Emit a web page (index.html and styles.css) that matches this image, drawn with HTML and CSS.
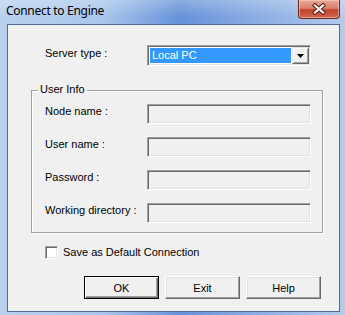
FILE: index.html
```html
<!DOCTYPE html>
<html>
<head>
    <meta charset="UTF-8">
    <title>Connect to Engine</title>
    <link rel="stylesheet" href="styles.css">
</head>
<body>
    <div class="window">
        <div class="titlebar">
            <span class="title">Connect to Engine</span>
            <div class="close">
                <svg width="14" height="12" viewBox="0 0 14 12">
                    <path d="M3 2.5 L11 9.5 M11 2.5 L3 9.5" stroke="#5a1c12" stroke-width="4.2" stroke-linecap="square"/>
                    <path d="M3 2.5 L11 9.5 M11 2.5 L3 9.5" stroke="#fff" stroke-width="2.2" stroke-linecap="square"/>
                </svg>
            </div>
        </div>
        <div class="client">
            <div class="row server-row">
                <span class="label">Server type :</span>
                <div class="combo">
                    <span class="combo-value">Local PC</span>
                    <span class="combo-btn">
                        <svg width="7" height="4" viewBox="0 0 7 4"><polygon points="0,0 7,0 3.5,4" fill="#000"/></svg>
                    </span>
                </div>
            </div>
            <div class="group">
                <span class="legend">User Info</span>
                <div class="row"><span class="label">Node name :</span><div class="field"></div></div>
                <div class="row"><span class="label">User name :</span><div class="field"></div></div>
                <div class="row"><span class="label">Password :</span><div class="field"></div></div>
                <div class="row"><span class="label">Working directory :</span><div class="field"></div></div>
            </div>
            <div class="check-row">
                <span class="checkbox"></span>
                <span class="check-label">Save as Default Connection</span>
            </div>
            <div class="buttons">
                <button class="btn default">OK</button>
                <button class="btn">Exit</button>
                <button class="btn">Help</button>
            </div>
        </div>
    </div>
</body>
</html>
```

FILE: styles.css
```css
*{
    margin: 0;
    padding: 0;
    box-sizing: border-box;
}
html,body{
    width: 100%;
    height: 100%;
    background: #fff;
}
.window{
    width: 345px;
    height: 315px;
    display: flex;
    flex-direction: column;
    background: linear-gradient(to right, #b9d1ee 0%, #a9c6ec 30%, #6592d8 52%, #86aae2 72%, #b3cbec 100%);
    font-family: "Liberation Sans", Arial, sans-serif;
    font-size: 11px;
    color: #000;
}
.titlebar{
    height: 24px;
    display: flex;
    align-items: flex-start;
    background: linear-gradient(to bottom, rgba(255,255,255,.25), rgba(255,255,255,0) 70%);
}
.title{
    font-family: "Noto Sans", "Open Sans", sans-serif;
    font-size: 12px;
    line-height: 16px;
    letter-spacing: -0.3px;
    padding: 3px 0 0 6px;
}
.close{
    margin-left: auto;
    margin-right: 5px;
    width: 42px;
    height: 19px;
    display: flex;
    align-items: center;
    justify-content: center;
    border: 1px solid #6a2a20;
    border-top: 0;
    border-radius: 0 0 4px 4px;
    background: linear-gradient(to bottom, #e8a898 0%, #d9806c 45%, #c2442e 55%, #d0664c 100%);
    box-shadow: inset 0 0 0 1px rgba(255,220,210,.5);
}
.client{
    flex: 1;
    margin: 0 5px 3px 7px;
    background: #f0f0f0;
    border: 1px solid #4e6c94;
    padding-top: 20px;
    display: flex;
    flex-direction: column;
}
.row{
    display: flex;
    align-items: flex-start;
}
.label{
    width: 102px;
    line-height: 13px;
    padding-top: 1px;
}
.server-row{
    margin-left: 37px;
}
.server-row .label{
    padding-top: 2px;
}
.combo{
    width: 164px;
    height: 21px;
    display: flex;
    background: #fff;
    border: 1px solid;
    border-color: #a0a0a0 #fff #fff #a0a0a0;
    box-shadow: inset 1px 1px #696969, inset -1px -1px #e3e3e3;
    padding: 1px 1px 1px 1px;
}
.combo-value{
    flex: 1;
    margin: 1px 1px 1px 1px;
    background: #3399ff;
    color: #fff;
    line-height: 15px;
    padding-left: 2px;
}
.combo-btn{
    width: 17px;
    height: 17px;
    display: flex;
    align-items: center;
    justify-content: center;
    background: #f0f0f0;
    border: 1px solid;
    border-color: #e3e3e3 #696969 #696969 #e3e3e3;
    box-shadow: inset 1px 1px #fff, inset -1px -1px #a0a0a0;
}
.group{
    position: relative;
    margin: 24px 0 0 23px;
    width: 292px;
    border: 1px solid #a0a0a0;
    box-shadow: 1px 1px #fff, inset 1px 1px #fff;
    padding: 13px 0 9px 13px;
    display: flex;
    flex-direction: column;
    gap: 13px;
}
.legend{
    position: absolute;
    top: -8px;
    left: 6px;
    padding: 0 2px;
    line-height: 13px;
    background: #f0f0f0;
}
.field{
    width: 164px;
    height: 20px;
    background: #f0f0f0;
    border: 1px solid;
    border-color: #a0a0a0 #fff #fff #a0a0a0;
    box-shadow: inset 1px 1px #696969, inset -1px -1px #e3e3e3;
}
.check-row{
    margin: 13px 0 0 37px;
    display: flex;
    align-items: center;
    gap: 5px;
    height: 13px;
}
.checkbox{
    width: 13px;
    height: 13px;
    background: #fff;
    border: 1px solid;
    border-color: #a0a0a0 #fff #fff #a0a0a0;
    box-shadow: inset 1px 1px #696969, inset -1px -1px #e3e3e3;
}
.check-label{
    line-height: 13px;
}
.buttons{
    margin: 17px 0 0 76px;
    display: flex;
    gap: 6px;
}
.btn{
    width: 75px;
    height: 23px;
    font-family: "Liberation Sans", Arial, sans-serif;
    font-size: 11px;
    color: #000;
    background: #f0f0f0;
    border: 1px solid;
    border-color: #fff #696969 #696969 #fff;
    box-shadow: inset -1px -1px #a0a0a0, inset 1px 1px #e3e3e3;
}
.btn.default{
    border: 1px solid #000;
    box-shadow: inset 1px 1px #fff, inset -1px -1px #696969, inset -2px -2px #a0a0a0;
}
```
